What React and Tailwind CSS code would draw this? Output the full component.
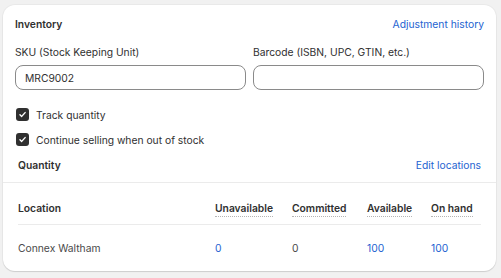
import React from 'react';

function Checkbox({ label }) {
  return (
    <label className="flex items-center h-[25px] gap-[7px] pl-px">
      <span className="w-[13px] h-[13px] rounded-[3px] bg-[#303030] flex items-center justify-center">
        <svg width="9" height="9" viewBox="0 0 10 10" fill="none">
          <path d="M2.2 5.2l1.9 1.9 3.8-4.2" stroke="white" strokeWidth="1.6" strokeLinecap="round" strokeLinejoin="round" />
        </svg>
      </span>
      <span className="text-[#303030]">{label}</span>
    </label>
  );
}

function Th({ children }) {
  return (
    <span className="border-b border-dotted border-[#b5b5b5] pb-[2px]">{children}</span>
  );
}

export default function App() {
  const rows = [{ location: 'Connex Waltham', unavailable: 0, committed: 0, available: 100, onHand: 100 }];

  return (
    <div className="w-[501px] h-[278px] bg-[#f1f1f1] pt-[5px] pl-[3px]" style={{ fontFamily: 'Inter, "Noto Sans", sans-serif' }}>
      <div className="w-[493px] h-[266px] bg-white rounded-[12px] shadow-[0_1px_1px_rgba(0,0,0,0.12),0_0_0_1px_rgba(0,0,0,0.03)] text-[10.3px] leading-4 text-[#303030] overflow-hidden">
        {/* Inventory fields */}
        <div className="pt-[11px] px-[12px]">
          <div className="flex justify-between items-center h-4">
            <h2 className="font-semibold">Inventory</h2>
            <a className="text-[#2463d1]">Adjustment history</a>
          </div>

          <div className="grid grid-cols-2 gap-[7px] mt-[12px]">
            <div>
              <p>SKU (Stock Keeping Unit)</p>
              <div className="mt-[5px] h-[25px] border border-[#8a8a8a] rounded-[8px] flex items-center px-[9px]">MRC9002</div>
            </div>
            <div>
              <p>Barcode (ISBN, UPC, GTIN, etc.)</p>
              <div className="mt-[5px] h-[25px] border border-[#8a8a8a] rounded-[8px]"></div>
            </div>
          </div>

          <div className="mt-[12px]">
            <Checkbox label="Track quantity" />
            <Checkbox label="Continue selling when out of stock" />
          </div>
        </div>

        {/* Quantity */}
        <div className="px-[15px] pt-[5px] pb-[9px] flex justify-between items-center border-b border-[#ebebeb]">
          <h3 className="font-semibold h-4">Quantity</h3>
          <a className="text-[#2463d1]">Edit locations</a>
        </div>

        <div className="px-[15px]">
          <div className="grid grid-cols-[197px_77px_75px_64px_auto] font-semibold pt-[17px] pb-[8px] border-b border-[#ebebeb]">
            <span>Location</span>
            <span><Th>Unavailable</Th></span>
            <span><Th>Committed</Th></span>
            <span><Th>Available</Th></span>
            <span><Th>On hand</Th></span>
          </div>
          {rows.map((r) => (
            <div key={r.location} className="grid grid-cols-[197px_77px_75px_64px_auto] pt-[15px]">
              <span className="text-[#4a4a4a]">{r.location}</span>
              <span className="text-[#2463d1]">{r.unavailable}</span>
              <span className="text-[#4a4a4a]">{r.committed}</span>
              <span className="text-[#2463d1]">{r.available}</span>
              <span className="text-[#2463d1]">{r.onHand}</span>
            </div>
          ))}
        </div>
      </div>
    </div>
  );
}
